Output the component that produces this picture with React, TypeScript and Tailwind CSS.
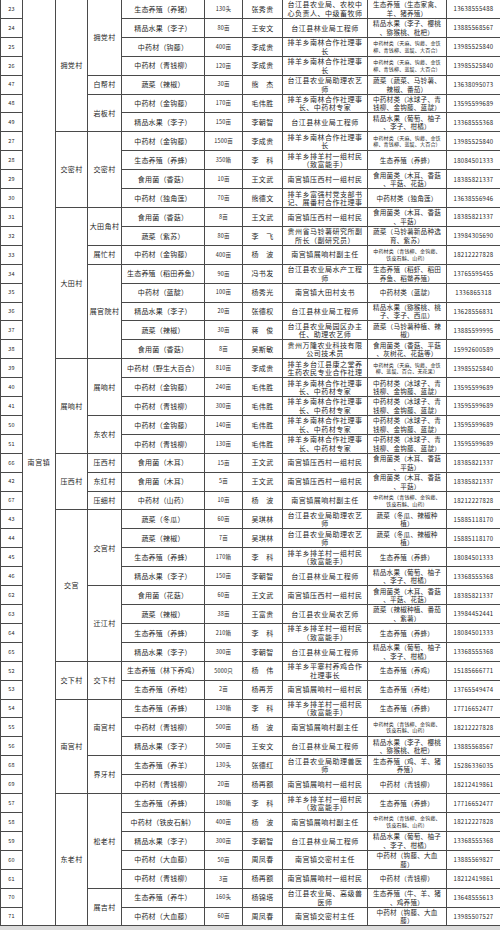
import * as React from 'react';

// [序号, 产业, 规模, 姓名, 职务, 技术专长, 电话] — "/" marks a line break, "~" marks small text
type Row = [string, string, string, string, string, string, string];

const ZY = '~中药材类（天麻、钩藤、金铁/柳、青钱柳、蓝靛、大百合）';
const NL = '排羊乡南林合作社理事/长';
const NL2 = '排羊乡南林合作社理事/长、中药材专家';
const BQ = '中药材类（冰球子、青/钱柳、金钩藤、蓝靛）';
const FY = '排羊乡排羊村一组村民/（致富能手）';
const LY = '台江县林业局工程师';
const YZ = '精品水果（葡萄、柚子/、李子、柑橘）';
const YB = '~中药材类（青钱柳、金钩藤、/铁皮石斛、山药）';
const YX = '南宫镇压西村一组村民';
const ZX = '南宫镇展响村副主任';
const ZY1 = '南宫镇展响村一组村民';
const LZ = '精品水果（李子、樱桃/、猕猴桃、枇杷）';
const NY = '台江县农业局助理农艺/师';

const groups: { name: string; subs: { name: string; rows: Row[] }[] }[] = [
  {
    name: '拥党村',
    subs: [
      {
        name: '拥党村',
        rows: [
          ['23', '生态养殖（养猪）', '130头', '张秀贵', '台江县农业局、农校中/心负责人、中级畜牧师', '生态养殖（生态家禽、/羊、猪养殖）', '13638555488'],
          ['24', '精品水果（李子）', '80亩', '王安文', LY, LZ, '13885568567'],
          ['25', '中药材（钩藤）', '400亩', '李成贵', NL, ZY, '13985525840'],
          ['26', '中药材（青钱柳）', '120亩', '李成贵', NL, ZY, '13985525840'],
        ],
      },
      {
        name: '白帮村',
        rows: [['47', '蔬菜（辣椒）', '30亩', '熊　杰', '台江县农业局助理农艺/师', '蔬菜（蔬菜、马铃薯、/辣椒、番茄）', '13638095073']],
      },
      {
        name: '岩板村',
        rows: [
          ['48', '中药材（金钩藤）', '170亩', '毛伟胜', NL2, BQ, '13595599689'],
          ['49', '精品水果（李子）', '150亩', '李朝智', LY, YZ, '13368555368'],
        ],
      },
    ],
  },
  {
    name: '交密村',
    subs: [
      {
        name: '交密村',
        rows: [
          ['27', '中药材（金钩藤）', '1500亩', '李成贵', NL, ZY, '13985525840'],
          ['28', '生态养殖（养蜂）', '350箱', '李　科', FY, '生态养殖（养蜂）', '18084501333'],
          ['29', '食用菌（香菇）', '10亩', '王文武', YX, '食用菌类（木耳、香菇/、平菇、花菇）', '18385821337'],
          ['30', '中药材（独角莲）', '70亩', '熊德文', '排羊乡富强村党支部书/记、展番村合作社理事', '中药材类（独角莲）', '13638556946'],
        ],
      },
    ],
  },
  {
    name: '大田村',
    subs: [
      {
        name: '大田角村',
        rows: [
          ['31', '食用菌（香菇）', '8亩', '王文武', YX, '食用菌类（木耳、香菇/、平菇）', '18385821337'],
          ['32', '蔬菜（紫苏）', '80亩', '李　飞', '贵州省马铃薯研究所副/所长（副研究员）', '蔬菜（马铃薯新品种选/育、紫苏）', '13984305690'],
        ],
      },
      {
        name: '展忙村',
        rows: [['33', '中药材（金钩藤）', '400亩', '杨　波', ZX, YB, '18212227828']],
      },
      {
        name: '展官院村',
        rows: [
          ['34', '生态养殖（稻田养鱼）', '90亩', '冯书发', '台江县农业局水产工程/师', '生态养殖（稻虾、稻田/养鱼、稻鳖养殖）', '13765595455'],
          ['35', '中药材（蓝靛）', '100亩', '杨秀光', '南宫镇大田村支书', '中药材类（蓝靛）', '1336865318'],
          ['36', '精品水果（李子）', '20亩', '张德权', LY, '精品水果（猕猴桃、桃/子、李子、西瓜）', '13628556831'],
          ['37', '蔬菜（辣椒）', '30亩', '蒋　俊', '台江县农业局园区办主/任、助理农艺师', '蔬菜（马铃薯种植、辣/椒）', '13885599995'],
          ['38', '食用菌（香菇）', '8亩', '吴斯敏', '贵州万隆农业科技有限/公司技术员', '食用菌类（香菇、平菇/、灰树花、花菇等）', '15992600589'],
        ],
      },
    ],
  },
  {
    name: '展响村',
    subs: [
      {
        name: '展响村',
        rows: [
          ['39', '中药材（野生大百合）', '810亩', '李成贵', '排羊乡台江县康之堂养/生药农民专业合作社理', '~中药材类（天麻、钩藤、金铁/柳、蓝靛、百合、无花果）', '13985525840'],
          ['40', '中药材（金钩藤）', '240亩', '毛伟胜', NL2, BQ, '13595599689'],
          ['41', '中药材（青钱柳）', '300亩', '毛伟胜', NL2, BQ, '13595599689'],
        ],
      },
      {
        name: '东农村',
        rows: [
          ['50', '中药材（金钩藤）', '140亩', '毛伟胜', NL2, BQ, '13595599689'],
          ['51', '中药材（青钱柳）', '130亩', '毛伟胜', NL2, BQ, '13595599689'],
        ],
      },
    ],
  },
  {
    name: '压西村',
    subs: [
      { name: '压西村', rows: [['66', '食用菌（木耳）', '15亩', '王文武', YX, '食用菌类（木耳、香菇/、平菇）', '18385821337']] },
      { name: '东红村', rows: [['42', '食用菌（木耳）', '5亩', '王文武', YX, '食用菌类（木耳、香菇/、平菇）', '18385821337']] },
      { name: '压细村', rows: [['67', '中药材（山药）', '10亩', '杨　波', ZX, YB, '18212227828']] },
    ],
  },
  {
    name: '交宫',
    subs: [
      {
        name: '交宫村',
        rows: [
          ['43', '蔬菜（冬瓜）', '60亩', '吴琪林', NY, '蔬菜（冬瓜、辣椒种/植）', '15885118170'],
          ['44', '蔬菜（辣椒）', '7亩', '吴琪林', NY, '蔬菜（冬瓜、辣椒种/植）', '15885118170'],
          ['45', '生态养殖（养蜂）', '170箱', '李　科', FY, '生态养殖（养蜂）', '18084501333'],
          ['46', '精品水果（李子）', '150亩', '李朝智', LY, YZ, '13368555368'],
        ],
      },
      {
        name: '迁江村',
        rows: [
          ['62', '食用菌（花菇）', '60亩', '王文武', YX, '食用菌类（木耳、香菇/、平菇、花菇）', '18385821337'],
          ['63', '蔬菜（辣椒）', '38亩', '王富贵', '台江县农业局农艺师', '蔬菜（辣椒种植、番茄/、紫薯）', '13984452441'],
          ['64', '生态养殖（养蜂）', '210箱', '李　科', FY, '生态养殖（养蜂）', '18084501333'],
          ['65', '精品水果（李子）', '300亩', '李朝智', LY, YZ, '13368555368'],
        ],
      },
    ],
  },
  {
    name: '交下村',
    subs: [
      {
        name: '交下村',
        rows: [
          ['52', '生态养殖（林下养鸡）', '5000只', '杨　伟', '排羊乡平寨村养鸡合作/社理事长', '生态养殖（养鸡）', '15185666771'],
          ['53', '生态养殖（养蛙）', '2亩', '杨再芳', ZY1, '生态养殖（养蛙）', '13765549474'],
        ],
      },
    ],
  },
  {
    name: '南宫村',
    subs: [
      {
        name: '南宫村',
        rows: [
          ['54', '生态养殖（养蜂）', '130箱', '李　科', FY, '生态养殖（养蜂）', '17716652477'],
          ['55', '中药材（青钱柳）', '500亩', '杨　波', ZX, YB, '18212227828'],
          ['56', '精品水果（李子）', '500亩', '王安文', LY, LZ, '13885568567'],
        ],
      },
      {
        name: '界牙村',
        rows: [
          ['68', '生态养殖（养羊）', '130头', '张德红', '台江县农业局助理兽医/师', '生态养殖（鸡、羊、猪/养殖）', '15286336035'],
          ['69', '中药材（青钱柳）', '20亩', '杨再额', ZY1, '中药材（青钱柳）', '18212419861'],
        ],
      },
    ],
  },
  {
    name: '东老村',
    subs: [
      {
        name: '松老村',
        rows: [
          ['57', '生态养殖（养蜂）', '180箱', '李　科', FY, '生态养殖（养蜂）', '17716652477'],
          ['58', '中药材（铁皮石斛）', '400亩', '杨　波', ZX, YB, '18212227828'],
          ['59', '精品水果（李子）', '300亩', '李朝智', LY, YZ, '13368555368'],
          ['60', '中药材（大血藤）', '50亩', '周凤春', '南宫镇交密村主任', '中药材（钩藤、大血/藤）', '13885569827'],
          ['61', '中药材（青钱柳）', '3亩', '杨再额', ZY1, '中药材（青钱柳）', '18212419861'],
        ],
      },
      {
        name: '展吉村',
        rows: [
          ['70', '生态养殖（养牛）', '160头', '杨锦塔', '台江县农业局、高级兽/医师', '生态养殖（牛、羊、猪/、鸡养殖）', '13648555613'],
          ['71', '中药材（大血藤）', '60亩', '周凤春', '南宫镇交密村主任', '中药材（钩藤、大血/藤）', '13985507527'],
        ],
      },
    ],
  },
];

const td = 'border border-[#4a4a4a] text-center align-middle p-0 h-[18.92px] whitespace-nowrap';

function Lines({ text }: { text: string }) {
  const parts = text.split('/');
  return (
    <>
      {parts.map((p, i) => (
        <div key={i} className="whitespace-nowrap">{p}</div>
      ))}
    </>
  );
}

function Skill({ text }: { text: string }) {
  if (text.startsWith('~')) {
    return (
      <div className="text-[5px] leading-[6.5px] tracking-[0.2px]">
        <Lines text={text.slice(1)} />
      </div>
    );
  }
  return (
    <div className="text-[6.6px] leading-[8.5px] tracking-[0.2px]">
      <Lines text={text} />
    </div>
  );
}

export default function App() {
  const total = groups.reduce((n, g) => n + g.subs.reduce((m, s) => m + s.rows.length, 0), 0);
  const body: React.ReactNode[] = [];
  let first = true;

  groups.forEach((g) => {
    const gCount = g.subs.reduce((m, s) => m + s.rows.length, 0);
    let gFirst = true;
    g.subs.forEach((s) => {
      s.rows.forEach((r, ri) => {
        body.push(
          <tr key={r[0]}>
            <td className={`${td} text-[5.5px] tracking-[0.3px]`}>{r[0]}</td>
            {first && (
              <td rowSpan={total} className={`${td} text-[7px] tracking-[0.6px]`}>南宫镇</td>
            )}
            {gFirst && (
              <td rowSpan={gCount} className={`${td} text-[7px] tracking-[0.4px]`}>{g.name}</td>
            )}
            {ri === 0 && (
              <td rowSpan={s.rows.length} className={`${td} text-[7px] tracking-[0.4px]`}>{s.name}</td>
            )}
            <td className={`${td} text-[7px] tracking-[0.2px]`}>{r[1]}</td>
            <td className={`${td} text-[5.5px] tracking-[0.2px]`}>{r[2]}</td>
            <td className={`${td} text-[7px] tracking-[0.4px]`}>{r[3]}</td>
            <td className={`${td} text-[7px] leading-[8.5px] tracking-[0.5px]`}>
              <Lines text={r[4]} />
            </td>
            <td className={td}>
              <Skill text={r[5]} />
            </td>
            <td className={`${td} text-[6px] tracking-[0.3px]`}>{r[6]}</td>
          </tr>
        );
        first = false;
        gFirst = false;
      });
    });
  });

  return (
    <div className="min-h-screen bg-[#dcdcdc] overflow-hidden">
      <table
        className="w-[500px] table-fixed border-collapse bg-white text-[#262626] -mt-px"
        style={{ fontFamily: '"Noto Sans CJK SC", "Noto Sans", sans-serif' }}
      >
        <colgroup>
          <col className="w-[22px]" />
          <col className="w-[33px]" />
          <col className="w-[32px]" />
          <col className="w-[34px]" />
          <col className="w-[83px]" />
          <col className="w-[38px]" />
          <col className="w-[40px]" />
          <col className="w-[85px]" />
          <col className="w-[79px]" />
          <col className="w-[54px]" />
        </colgroup>
        <tbody>{body}</tbody>
      </table>
    </div>
  );
}
